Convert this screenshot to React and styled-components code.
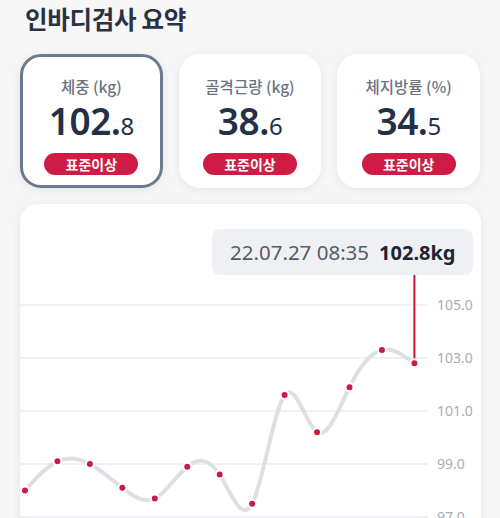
import { createGlobalStyle, styled } from 'styled-components';

const GlobalStyle = createGlobalStyle`
  html, body {
    margin: 0;
    background: #f6f6f7;
    font-family: 'Noto Sans CJK KR', 'Noto Sans', sans-serif;
  }
`;

const Page = styled.div`
  padding: 0 20px;
`;

const Title = styled.h1`
  margin: 0;
  padding: 1px 0 0 5px;
  font-size: 24.5px;
  line-height: 36px;
  font-weight: 700;
  color: #2a3143;
  letter-spacing: -0.3px;
`;

const CardGrid = styled.div`
  display: grid;
  grid-template-columns: repeat(3, 1fr);
  gap: 16px;
  margin-top: 17px;
`;

const Card = styled.div`
  box-sizing: border-box;
  height: 134px;
  border-radius: 21px;
  background: #fff;
  border: 3px solid ${p => (p.$active ? '#6b7a8e' : 'transparent')};
  box-shadow: 0 2px 10px rgb(0 0 0 / 0.07);
  display: flex;
  flex-direction: column;
  align-items: center;
  padding-top: 18px;
`;

const CardLabel = styled.div`
  font-size: 15.5px;
  line-height: 22px;
  font-weight: 500;
  color: #6b7280;
`;

const CardValue = styled.div`
  margin-top: 2px;
  font-family: 'Noto Sans', sans-serif;
  font-size: 37px;
  line-height: 44px;
  font-weight: 600;
  color: #243045;
  letter-spacing: -0.5px;

  & small {
    font-size: 24px;
    font-weight: 400;
  }
`;

const Badge = styled.div`
  margin-top: 5px;
  width: 94px;
  height: 22px;
  border-radius: 11px;
  background: #d01c45;
  color: #fff;
  font-size: 14px;
  font-weight: 700;
  line-height: 22px;
  text-align: center;
`;

const ChartPanel = styled.div`
  position: relative;
  margin-top: 16px;
  height: 340px;
  width: 461px;
  border-radius: 18px;
  background: #fff;
  box-shadow: 0 2px 10px rgb(0 0 0 / 0.07);
  overflow: hidden;
`;

const Tooltip = styled.div`
  position: absolute;
  left: 192px;
  top: 25px;
  width: 261px;
  height: 46px;
  box-sizing: border-box;
  border-radius: 8px;
  background: #eff0f3;
  display: flex;
  align-items: center;
  gap: 10px;
  padding-left: 18px;
  font-family: 'Noto Sans', sans-serif;
  font-size: 20.5px;
  color: #575c64;

  & b {
    font-size: 20px;
    font-weight: 700;
    color: #1e2433;
  }
`;

const cards = [
  { label: '체중 (kg)', whole: '102', frac: '8', active: true },
  { label: '골격근량 (kg)', whole: '38', frac: '6' },
  { label: '체지방률 (%)', whole: '34', frac: '5' },
];

const values = [98.0, 99.1, 99.0, 98.1, 97.7, 98.9, 98.6, 97.5, 101.6, 100.2, 101.9, 103.3, 102.8];
const ticks = [105, 103, 101, 99, 97];
const toY = v => 154 - (v - 103) * 26.5;
const toX = i => 5 + i * 32.45;

function controlPoints(x) {
  const n = x.length - 1;
  const a = new Array(n);
  const b = new Array(n);
  const r = new Array(n);
  a[0] = 0;
  b[0] = 2;
  r[0] = x[0] + 2 * x[1];
  for (let i = 1; i < n - 1; ++i) {
    a[i] = 1;
    b[i] = 4;
    r[i] = 4 * x[i] + 2 * x[i + 1];
  }
  a[n - 1] = 2;
  b[n - 1] = 7;
  r[n - 1] = 8 * x[n - 1] + x[n];
  for (let i = 1; i < n; ++i) {
    const m = a[i] / b[i - 1];
    b[i] -= m;
    r[i] -= m * r[i - 1];
  }
  a[n - 1] = r[n - 1] / b[n - 1];
  for (let i = n - 2; i >= 0; --i) a[i] = (r[i] - a[i + 1]) / b[i];
  b[n - 1] = (x[n] + a[n - 1]) / 2;
  for (let i = 0; i < n - 1; ++i) b[i] = 2 * x[i + 1] - a[i + 1];
  return [a, b];
}

function linePath() {
  const xs = values.map((_, i) => toX(i));
  const ys = values.map(toY);
  const [ax, bx] = controlPoints(xs);
  const [ay, by] = controlPoints(ys);
  let d = `M${xs[0]},${ys[0]}`;
  for (let i = 0; i < xs.length - 1; i++) {
    d += ` C${ax[i]},${ay[i]} ${bx[i]},${by[i]} ${xs[i + 1]},${ys[i + 1]}`;
  }
  return d;
}

function Chart() {
  const last = values.length - 1;
  return (
    <ChartPanel>
      <svg width="461" height="340">
        {ticks.map(t => (
          <g key={t}>
            <line x1="0" x2="408" y1={toY(t)} y2={toY(t)} stroke="#ebedf0" strokeWidth="1.5" />
            <text
              x="417"
              y={toY(t) + 5}
              fontSize="14"
              fill="#a8adb5"
              fontFamily="'Noto Sans', sans-serif"
            >
              {t.toFixed(1)}
            </text>
          </g>
        ))}
        <line x1={toX(last)} x2={toX(last)} y1="71" y2={toY(values[last])} stroke="#c8123d" strokeWidth="2" />
        <path d={linePath()} fill="none" stroke="#dcdfe4" strokeWidth="4" strokeLinecap="round" />
        {values.map((v, i) => (
          <circle key={i} cx={toX(i)} cy={toY(v)} r="4" fill="#cc1a45" stroke="#fff" strokeWidth="2" />
        ))}
      </svg>
      <Tooltip>
        <span>22.07.27 08:35</span>
        <b>102.8kg</b>
      </Tooltip>
    </ChartPanel>
  );
}

export default function App() {
  return (
    <Page>
      <GlobalStyle />
      <Title>인바디검사 요약</Title>
      <CardGrid>
        {cards.map(c => (
          <Card key={c.label} $active={c.active}>
            <CardLabel>{c.label}</CardLabel>
            <CardValue>
              {c.whole}.<small>{c.frac}</small>
            </CardValue>
            <Badge>표준이상</Badge>
          </Card>
        ))}
      </CardGrid>
      <Chart />
    </Page>
  );
}
